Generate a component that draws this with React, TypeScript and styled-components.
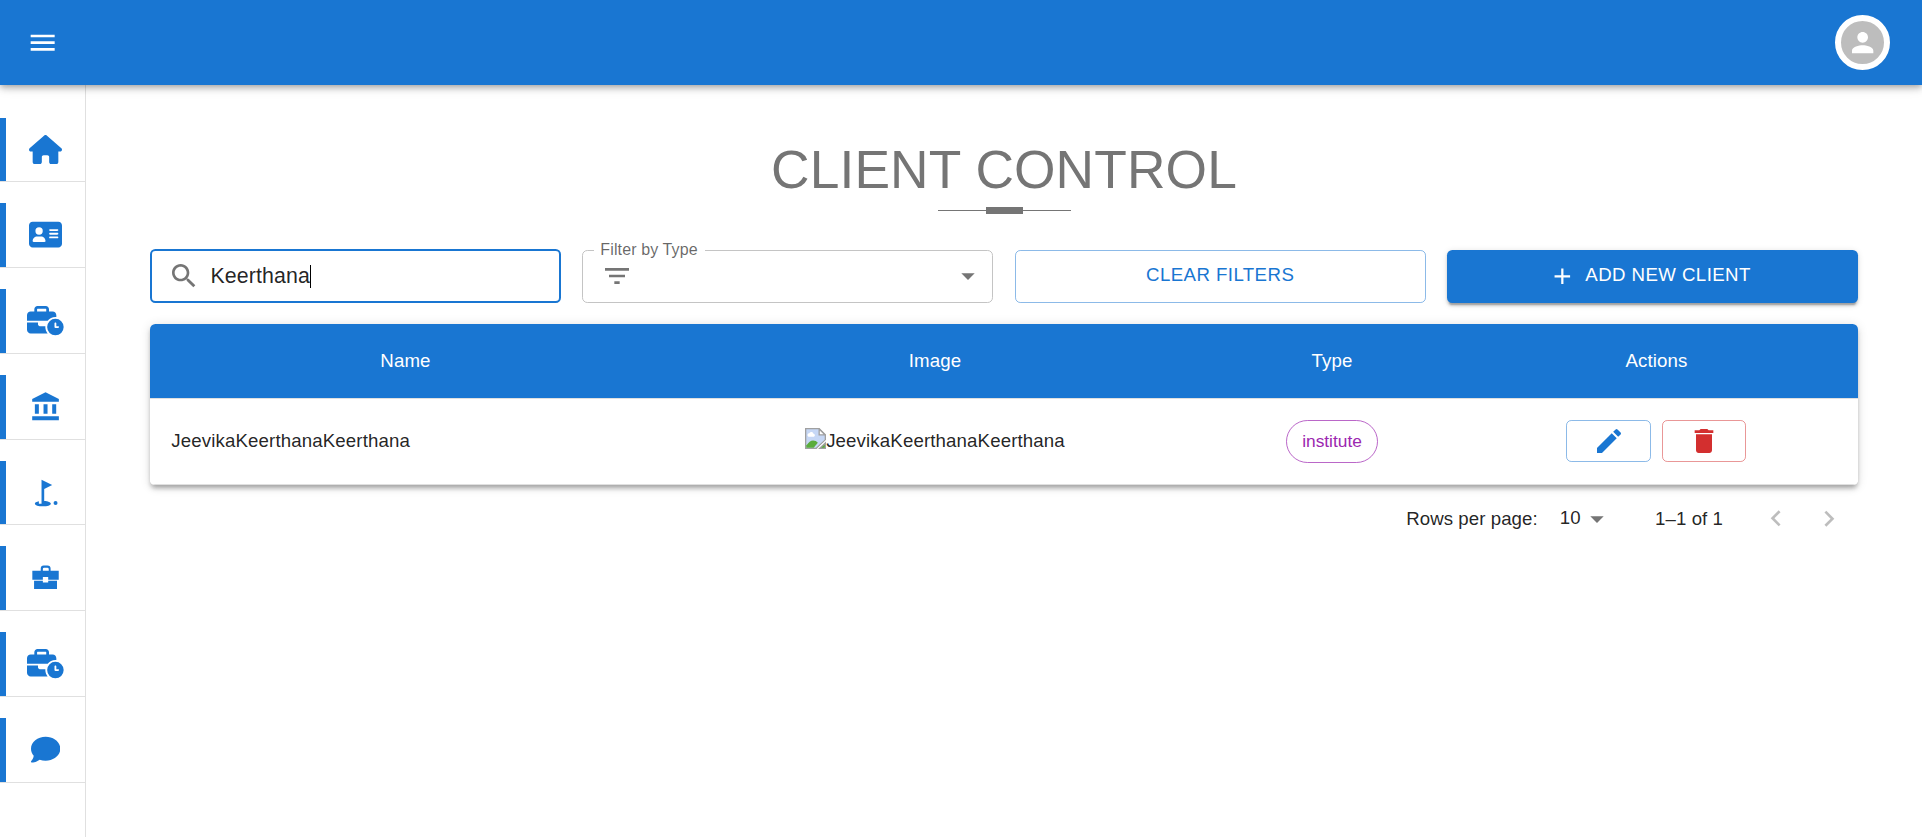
import React from "react";
import styled, { createGlobalStyle } from "styled-components";
import { FaHouse, FaAddressCard, FaBusinessTime, FaComment } from "react-icons/fa6";

const BLUE = "#1976d2";
const GREY = "#757575";

const GlobalStyle = createGlobalStyle`
  * { box-sizing: border-box; }
  body {
    margin: 0;
    background: #fff;
    color: rgba(0, 0, 0, 0.87);
    font-family: "Liberation Sans", Arial, sans-serif;
    overflow: hidden;
  }
`;

const Page = styled.div`
  display: flex;
  flex-direction: column;
  height: 837px;
`;

const AppBar = styled.header`
  position: relative;
  z-index: 2;
  flex: none;
  display: flex;
  align-items: center;
  justify-content: space-between;
  height: 85px;
  padding: 0 32px 0 27px;
  background: ${BLUE};
  color: #fff;
  box-shadow: 0 2.67px 5.33px -1.33px rgba(0, 0, 0, 0.2),
    0 5.33px 6.67px 0 rgba(0, 0, 0, 0.14), 0 1.33px 13.33px 0 rgba(0, 0, 0, 0.12);
`;

const Avatar = styled.div`
  display: flex;
  align-items: center;
  justify-content: center;
  width: 55px;
  height: 55px;
  border: 6px solid #fff;
  border-radius: 50%;
  background: #bdbdbd;
`;

const Body = styled.div`
  flex: 1;
  display: flex;
  min-height: 0;
`;

const Sidebar = styled.nav`
  flex: none;
  display: flex;
  flex-direction: column;
  gap: 21.04px;
  width: 86px;
  padding-top: 32.5px;
  border-right: 1px solid #e0e0e0;
`;

const NavItem = styled.a`
  flex: none;
  display: flex;
  height: 64.75px;
  border-bottom: 1px solid #e0e0e0;
  color: ${BLUE};
`;

const NavMarker = styled.span`
  width: 6px;
  background: ${BLUE};
`;

const NavIcon = styled.span<{ $width: number }>`
  flex: 1;
  display: flex;
  align-items: center;
  justify-content: center;

  svg {
    width: ${(p) => p.$width}px;
  }
`;

const Main = styled.main`
  flex: 1;
  padding: 53px 64px 0;
`;

const Title = styled.h1`
  margin: 0;
  color: ${GREY};
  font-size: 53.33px;
  font-weight: 400;
  line-height: 64px;
  letter-spacing: 0.12px;
  text-align: center;
`;

const Divider = styled.div`
  display: flex;
  align-items: center;
  justify-content: center;
  height: 7px;
  margin: 5px 0 35px;
`;

const DividerLine = styled.span`
  width: 48px;
  height: 1px;
  background: ${GREY};
`;

const DividerBlock = styled.span`
  width: 37px;
  height: 7px;
  background: ${GREY};
`;

const Controls = styled.div`
  display: grid;
  grid-template-columns: repeat(4, 1fr);
  gap: 21.33px;
  align-items: end;
  margin-bottom: 21px;
`;

const SearchField = styled.div`
  display: flex;
  align-items: center;
  height: 54px;
  padding-left: 16px;
  border: 2px solid ${BLUE};
  border-radius: 5.33px;
  font-size: 21.33px;
  letter-spacing: 0.12px;

  svg {
    color: ${GREY};
  }
`;

const SearchText = styled.span`
  margin-left: 10.4px;
`;

const Caret = styled.span`
  width: 1px;
  height: 23px;
  background: #000;
`;

const SelectField = styled.div`
  position: relative;
  display: flex;
  align-items: center;
  justify-content: space-between;
  height: 53px;
  padding: 0 8.5px 2px 18px;
  border: 1px solid #c4c4c4;
  border-radius: 5.33px;
  color: ${GREY};
`;

const SelectLabel = styled.span`
  position: absolute;
  top: -11px;
  left: 11px;
  width: 111px;
  padding-left: 6px;
  background: #fff;
  color: rgba(0, 0, 0, 0.6);
  font-size: 16px;
  line-height: 20px;
  letter-spacing: 0.12px;
  white-space: nowrap;
`;

const Button = styled.button<{ $filled?: boolean }>`
  display: flex;
  align-items: center;
  justify-content: center;
  gap: 9.5px;
  height: 53px;
  padding: ${(p) => (p.$filled ? "0 5px 3px 0" : "0 0 3px")};
  border: ${(p) => (p.$filled ? "0" : "1px solid rgba(25, 118, 210, 0.5)")};
  border-radius: 5.33px;
  background: ${(p) => (p.$filled ? BLUE : "transparent")};
  color: ${(p) => (p.$filled ? "#fff" : BLUE)};
  font: 400 18.67px "Liberation Sans", Arial, sans-serif;
  letter-spacing: 0.42px;
  box-shadow: ${(p) =>
    p.$filled
      ? "0 4px 1.33px -2.67px rgba(0,0,0,.2), 0 2.67px 2.67px 0 rgba(0,0,0,.14), 0 1.33px 6.67px 0 rgba(0,0,0,.12)"
      : "none"};

  svg {
    margin-top: 2px;
  }
`;

const Table = styled.div`
  overflow: hidden;
  border-radius: 5.33px;
  background: #fff;
`;

const TablePaper = styled.div`
  border-radius: 5.33px;
  box-shadow: 0 4px 4px -2.67px rgba(0, 0, 0, 0.2),
    0 4px 5.33px 0 rgba(0, 0, 0, 0.14), 0 1.33px 10.67px 0 rgba(0, 0, 0, 0.12);
`;

const TableRow = styled.div<{ $head?: boolean }>`
  display: grid;
  grid-template-columns: 511px 548px 246px 403px;
  height: ${(p) => (p.$head ? 75 : 86)}px;
  border-bottom: 1px solid #e0e0e0;
  background: ${(p) => (p.$head ? BLUE : "#fff")};
  color: ${(p) => (p.$head ? "#fff" : "inherit")};
  font-size: 18.67px;
  letter-spacing: 0.13px;
`;

const Cell = styled.div<{ $left?: boolean; $raised?: boolean }>`
  display: flex;
  align-items: center;
  justify-content: ${(p) => (p.$left ? "flex-start" : "center")};
  padding: 0 21.33px ${(p) => (p.$raised ? 2 : 0)}px;
`;

const MissingImage = styled.span`
  display: flex;
  align-items: center;

  svg {
    margin-top: -4px;
  }
`;

const Chip = styled.span`
  display: flex;
  align-items: center;
  height: 43px;
  padding: 0 15px;
  border: 1px solid rgba(156, 39, 176, 0.7);
  border-radius: 21.5px;
  color: #9c27b0;
  font-size: 17.33px;
  letter-spacing: 0;
`;

const Actions = styled.div`
  display: flex;
  gap: 11px;
  margin-right: 1px;
`;

const IconButton = styled.button<{ $danger?: boolean }>`
  display: flex;
  align-items: center;
  justify-content: center;
  width: ${(p) => (p.$danger ? 84 : 85)}px;
  height: 42px;
  padding: 0;
  border: 1px solid ${(p) => (p.$danger ? "rgba(211, 47, 47, 0.5)" : "rgba(25, 118, 210, 0.5)")};
  border-radius: 5.33px;
  background: transparent;
  color: ${(p) => (p.$danger ? "#d32f2f" : BLUE)};
`;

const Pagination = styled.div`
  display: flex;
  align-items: center;
  justify-content: flex-end;
  height: 67px;
  padding-right: 13px;
  font-size: 18.67px;
  letter-spacing: 0.06px;
`;

const PageSize = styled.span`
  display: flex;
  align-items: center;
  margin: -2px 52px 0 22px;

  svg {
    margin: 2px -9.5px 0 0;
    color: ${GREY};
  }
`;

const PageArrows = styled.span`
  display: flex;
  gap: 21px;
  margin-left: 37px;
  color: rgba(0, 0, 0, 0.26);
`;

type GlyphProps = {
  d?: string;
  size?: number;
  shiftX?: number;
  shiftY?: number;
  children?: React.ReactNode;
};

const Glyph = ({ d, size = 32, shiftX = 0, shiftY = 0, children }: GlyphProps) => (
  <svg width={size} height={size} viewBox={`${shiftX} ${shiftY} 24 24`} fill="currentColor">
    {d && <path d={d} />}
    {children}
  </svg>
);

const ARROW_DROP = "M7 10l5 5 5-5z";

const navIcons: { width: number; icon: React.ReactNode }[] = [
  { width: 33, icon: <FaHouse size={29.33} /> },
  { width: 33, icon: <FaAddressCard size={29.33} /> },
  { width: 36.67, icon: <FaBusinessTime size={29.33} /> },
  {
    width: 32,
    icon: (
      <Glyph
        shiftX={0.35}
        d="M4 10v7h3v-7H4zm6.5 0v7h3v-7h-3zM2 22h20v-3H2v3zm15-12v7h3v-7h-3zM12 1L2 6v2h20V6L12 1z"
      />
    ),
  },
  {
    width: 32,
    icon: (
      <Glyph
        shiftX={0.35}
        d="M17 5.92L9 2v18H7v-1.73c-1.79.35-3 .99-3 1.73 0 1.1 2.69 2 6 2s6-.9 6-2c0-.99-2.16-1.81-5-1.97V8.98l6-3.06z"
      >
        <circle cx="19.5" cy="19.5" r="1.5" />
      </Glyph>
    ),
  },
  {
    width: 32,
    icon: (
      <Glyph
        shiftX={0.35}
        shiftY={-0.3}
        d="M2.1 6.2h6.3V4.5Q8.4 2.3 10.6 2.3h2.8Q15.8 2.3 15.8 4.5v1.7h6.1V13H14v-2h-4v2H2.1V6.2zm7.9 0h4.4V4.9Q14.4 4 13.4 4h-2.5Q10 4 10 4.9v1.3zM3.4 13.8H10V15h4v-1.2h6.6V20H3.4v-6.2z"
      />
    ),
  },
  { width: 36.67, icon: <FaBusinessTime size={29.33} /> },
  { width: 29.33, icon: <FaComment size={29.33} /> },
];

const BrokenImage = () => (
  <svg width="21" height="21" viewBox="0 0 16 16">
    <path d="M.5.5h10.3l4.7 4.7v4L8.6 15.5H.5z" fill="#c6d7f5" stroke="#a0a0a0" />
    <path d="M10.8.8v4.4h4.4z" fill="#fff" stroke="#a0a0a0" />
    <path d="M2.6 6.6a1.4 1.4 0 0 1 .7-2.6 1.7 1.7 0 0 1 3.2.3 1.2 1.2 0 0 1 .3 2.3z" fill="#fff" />
    <path d="M1 15v-1.6q2.5-3.9 5.2-3.9 2.2 0 3.6 1.7L6.6 15z" fill="#5aac3c" />
    <path d="M9.3 15.6L16 9.2v1.5L11 15.6z" fill="#fff" />
    <path d="M11.2 15.5h4.3v-4z" fill="#5aac3c" stroke="#a0a0a0" />
  </svg>
);

export default function App() {
  return (
    <>
      <GlobalStyle />
      <Page>
        <AppBar>
          <Glyph shiftX={0.25} shiftY={0.25} d="M3 18h18v-2H3v2zm0-5h18v-2H3v2zm0-7v2h18V6H3z" />
          <Avatar>
            <Glyph
              shiftX={0.25}
              shiftY={0.25}
              d="M12 12c2.21 0 4-1.79 4-4s-1.79-4-4-4-4 1.79-4 4 1.79 4 4 4zm0 2c-2.67 0-8 1.34-8 4v2h16v-2c0-2.66-5.33-4-8-4z"
            />
          </Avatar>
        </AppBar>
        <Body>
          <Sidebar>
            {navIcons.map(({ width, icon }, i) => (
              <NavItem key={i}>
                <NavMarker />
                <NavIcon $width={width}>{icon}</NavIcon>
              </NavItem>
            ))}
          </Sidebar>
          <Main>
            <Title>CLIENT CONTROL</Title>
            <Divider>
              <DividerLine />
              <DividerBlock />
              <DividerLine />
            </Divider>
            <Controls>
              <SearchField>
                <Glyph d="M15.5 14h-.79l-.28-.27C15.41 12.59 16 11.11 16 9.5 16 5.91 13.09 3 9.5 3S3 5.91 3 9.5 5.91 16 9.5 16c1.61 0 3.09-.59 4.23-1.57l.27.28v.79l5 4.99L20.49 19l-4.99-5zm-6 0C7.01 14 5 11.99 5 9.5S7.01 5 9.5 5 14 7.01 14 9.5 11.99 14 9.5 14z" />
                <SearchText>Keerthana</SearchText>
                <Caret />
              </SearchField>
              <SelectField>
                <SelectLabel>Filter by Type</SelectLabel>
                <Glyph d="M10 18h4v-2h-4v2zM3 6v2h18V6H3zm3 7h12v-2H6v2z" />
                <Glyph d={ARROW_DROP} />
              </SelectField>
              <Button>CLEAR FILTERS</Button>
              <Button $filled>
                <Glyph size={26.67} d="M19 13h-6v6h-2v-6H5v-2h6V5h2v6h6v2z" />
                ADD NEW CLIENT
              </Button>
            </Controls>
            <TablePaper>
              <Table>
                <TableRow $head>
                  <Cell>Name</Cell>
                  <Cell>Image</Cell>
                  <Cell>Type</Cell>
                  <Cell>Actions</Cell>
                </TableRow>
                <TableRow>
                  <Cell $left $raised>
                    JeevikaKeerthanaKeerthana
                  </Cell>
                  <Cell $raised>
                    <MissingImage>
                      <BrokenImage />
                      JeevikaKeerthanaKeerthana
                    </MissingImage>
                  </Cell>
                  <Cell>
                    <Chip>institute</Chip>
                  </Cell>
                  <Cell $raised>
                    <Actions>
                      <IconButton>
                        <Glyph d="M3 17.25V21h3.75L17.81 9.94l-3.75-3.75L3 17.25zM20.71 7.04c.39-.39.39-1.02 0-1.41l-2.34-2.34a.9959.9959 0 0 0-1.41 0l-1.83 1.83 3.75 3.75 1.83-1.83z" />
                      </IconButton>
                      <IconButton $danger>
                        <Glyph d="M6 19c0 1.1.9 2 2 2h8c1.1 0 2-.9 2-2V7H6v12zM19 4h-3.5l-1-1h-5l-1 1H5v2h14V4z" />
                      </IconButton>
                    </Actions>
                  </Cell>
                </TableRow>
              </Table>
            </TablePaper>
            <Pagination>
              <span>Rows per page:</span>
              <PageSize>
                10
                <Glyph d={ARROW_DROP} />
              </PageSize>
              <span>1–1 of 1</span>
              <PageArrows>
                <Glyph d="M15.41 16.09l-4.58-4.59 4.58-4.59L14 5.5l-6 6 6 6z" />
                <Glyph d="M8.59 16.34l4.58-4.59-4.58-4.59L10 5.75l6 6-6 6z" />
              </PageArrows>
            </Pagination>
          </Main>
        </Body>
      </Page>
    </>
  );
}
